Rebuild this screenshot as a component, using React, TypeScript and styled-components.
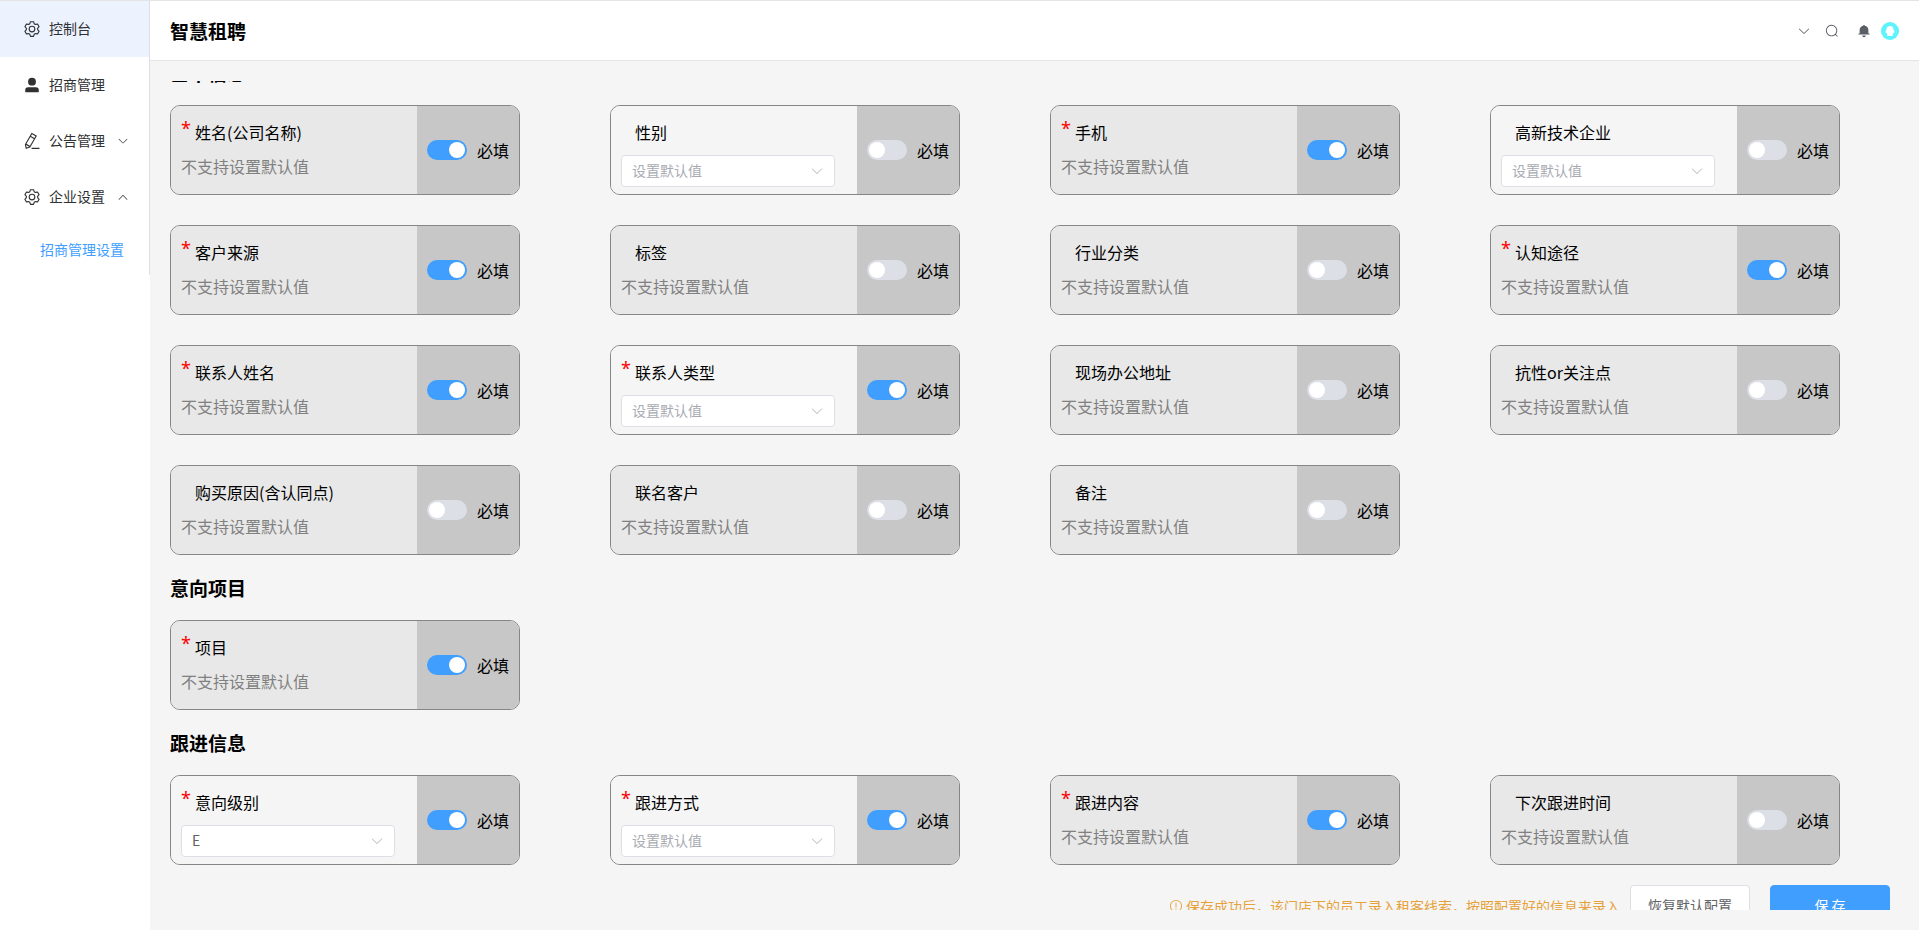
import React, { useLayoutEffect, useRef, useState } from "react";
import styled, { createGlobalStyle } from "styled-components";

const GlobalStyle = createGlobalStyle`
  *, *::before, *::after { box-sizing: border-box; }
  body {
    margin: 0;
    background: #f5f5f5;
    color: #000;
    font-family: "Noto Sans CJK SC", "Liberation Sans", sans-serif;
    font-size: 16px;
    font-weight: 400;
  }
  button, input, select { font: inherit; }
  h1, h2, p { margin: 0; }
`;

const Page = styled.div`
  display: flex;
  height: 100vh;
  border-top: 1px solid #e4e4e4;
`;

const Sidebar = styled.aside`
  flex: none;
  width: 150px;
  background: #fff;
`;

const Menu = styled.nav`
  display: flex;
  flex-direction: column;
  border-right: 1px solid #dcdfe6;
`;

const MenuItem = styled.a<{ $active?: boolean }>`
  display: flex;
  align-items: center;
  height: 56px;
  padding: 0 20px 0 23px;
  gap: 8px;
  background: ${(p) => (p.$active ? "#ecf3ff" : "transparent")};
  color: #303133;
  font-size: 14px;
  text-decoration: none;
`;

const MenuLabel = styled.span`
  padding-bottom: 2px;
`;

const MenuArrow = styled.span`
  display: flex;
  margin-left: auto;
`;

const SubMenuItem = styled.a`
  display: flex;
  align-items: center;
  height: 50px;
  padding: 0 0 2px 40px;
  color: #409eff;
  font-size: 14px;
  text-decoration: none;
  white-space: nowrap;
`;

const Body = styled.div`
  display: flex;
  flex: 1;
  flex-direction: column;
  min-width: 0;
`;

const Header = styled.header`
  display: flex;
  flex: none;
  align-items: center;
  justify-content: space-between;
  height: 60px;
  padding: 0 20px;
  background: #fff;
  border-bottom: 1px solid #e4e4e4;
`;

const Title = styled.h1`
  font-size: 19px;
  line-height: 24px;
  font-weight: 700;
`;

const HeaderTools = styled.div`
  display: flex;
  align-items: center;
  color: #5c5f66;
`;

const ToolButton = styled.button<{ $gap?: number }>`
  display: flex;
  padding: 0;
  margin-left: ${(p) => p.$gap ?? 0}px;
  border: 0;
  background: none;
  color: inherit;
`;

const Main = styled.main`
  display: flex;
  flex: 1;
  min-height: 0;
  padding: 20px;
`;

const Scroller = styled.div`
  flex: 1;
  overflow-y: auto;
  scrollbar-width: none;
`;

const SectionTitle = styled.h2`
  padding: 20px 0;
  font-size: 19px;
  line-height: 25px;
  font-weight: 700;
`;

const Grid = styled.div`
  display: grid;
  grid-template-columns: repeat(auto-fill, 350px);
  gap: 30px 90px;
`;

const Card = styled.div`
  display: flex;
  height: 90px;
  overflow: hidden;
  border: 1px solid #868686;
  border-radius: 10px;
`;

const Field = styled.div<{ $plain: boolean }>`
  flex: 1;
  padding: 14px 22px 0 10px;
  background: ${(p) => (p.$plain ? "#f5f5f5" : "#e8e8e8")};
`;

const FieldHead = styled.div`
  display: flex;
  height: 24px;
  line-height: 24px;
`;

const Star = styled.span`
  flex: none;
  width: 14px;
  color: #f00;
  font-family: "Noto Sans", sans-serif;
  font-size: 18px;
  line-height: 16px;
`;

const Unsupported = styled.p`
  padding-top: 10px;
  color: #808080;
  line-height: 24px;
`;

const SelectBox = styled.div`
  display: grid;
  align-items: center;
  margin-top: 11px;
  color: #b4b8c0;

  & > * { grid-area: 1 / 1; }
  & > svg { justify-self: end; margin-right: 11px; pointer-events: none; }
`;

const Select = styled.select<{ $empty: boolean }>`
  width: 100%;
  height: 32px;
  padding: 0 30px 2px 10px;
  appearance: none;
  border: 1px solid #dcdfe6;
  border-radius: 4px;
  background: #fff;
  color: ${(p) => (p.$empty ? "#a8abb2" : "#606266")};
  font-size: 14px;
`;

const Required = styled.label`
  display: flex;
  flex: none;
  align-items: center;
  gap: 10px;
  width: 102px;
  padding: 0 10px;
  background: #c7c7c7;
`;

const Switch = styled.input`
  flex: none;
  width: 40px;
  height: 20px;
  margin: 0;
  padding: 2px;
  appearance: none;
  border-radius: 10px;
  background: #dcdfe6;

  &::before {
    content: "";
    display: block;
    width: 16px;
    height: 16px;
    border-radius: 50%;
    background: #fff;
  }
  &:checked { background: #409eff; }
  &:checked::before { margin-left: 20px; }
`;

const Footer = styled.footer`
  display: flex;
  align-items: center;
  justify-content: flex-end;
  padding: 20px 9px 20px 0;
`;

const Notice = styled.p`
  display: flex;
  align-items: center;
  gap: 3px;
  padding-top: 2px;
  margin-right: 10px;
  color: #e6a23c;
  font-size: 14px;
`;

const Button = styled.button<{ $primary?: boolean }>`
  width: 120px;
  height: 40px;
  padding: 0;
  border: 1px solid ${(p) => (p.$primary ? "#409eff" : "#dcdfe6")};
  border-radius: 4px;
  background: ${(p) => (p.$primary ? "#409eff" : "#fff")};
  color: ${(p) => (p.$primary ? "#fff" : "#606266")};
  font-size: 14px;

  & + & { margin-left: 20px; }
`;

type IconProps = { size: number; path: string };

const Icon = ({ size, path }: IconProps) => (
  <svg width={size} height={size} viewBox="0 0 1024 1024" fill="currentColor" aria-hidden="true">
    <path d={path} />
  </svg>
);

const DOWN =
  "M831.872 340.864 512 652.672 192.128 340.864a30.592 30.592 0 0 0-42.752 0 29.12 29.12 0 0 0 0 41.6L489.664 714.24a32 32 0 0 0 44.672 0l340.288-331.712a29.12 29.12 0 0 0 0-41.728 30.592 30.592 0 0 0-42.752 0z";
const UP =
  "m488.832 344.32-339.84 356.672a32 32 0 0 0 0 44.16l.384.384a29.44 29.44 0 0 0 42.688 0l320-335.872 319.872 335.872a29.44 29.44 0 0 0 42.688 0l.384-.384a32 32 0 0 0 0-44.16L535.168 344.32a32 32 0 0 0-46.336 0z";
const GEAR =
  "M600.704 64a32 32 0 0 1 30.464 22.208l35.2 109.376c14.784 7.232 28.928 15.36 42.432 24.512l112.384-24.192a32 32 0 0 1 34.432 15.36L944.32 364.8a32 32 0 0 1-4.032 37.504l-77.12 85.12a357.12 357.12 0 0 1 0 49.024l77.12 85.248a32 32 0 0 1 4.032 37.504l-88.704 153.6a32 32 0 0 1-34.432 15.296L708.8 803.904c-13.44 9.088-27.648 17.28-42.368 24.512l-35.264 109.376A32 32 0 0 1 600.704 960H423.296a32 32 0 0 1-30.464-22.208L357.696 828.48a351.616 351.616 0 0 1-42.56-24.64l-112.32 24.256a32 32 0 0 1-34.432-15.36L79.68 659.2a32 32 0 0 1 4.032-37.504l77.12-85.248a357.12 357.12 0 0 1 0-48.896l-77.12-85.248A32 32 0 0 1 79.68 364.8l88.704-153.6a32 32 0 0 1 34.432-15.296l112.32 24.256c13.568-9.152 27.776-17.408 42.56-24.64l35.2-109.312A32 32 0 0 1 423.232 64H600.64zm-23.424 64H446.72l-36.352 113.088-24.512 11.968a294.113 294.113 0 0 0-34.816 20.096l-22.656 15.36-116.224-25.088-65.28 113.152 79.68 88.192-1.92 27.136a293.12 293.12 0 0 0 0 40.192l1.92 27.136-79.808 88.192 65.344 113.152 116.224-25.024 22.656 15.296a294.113 294.113 0 0 0 34.816 20.096l24.512 11.968L446.72 896h130.688l36.48-113.152 24.448-11.904a288.282 288.282 0 0 0 34.752-20.096l22.592-15.296 116.288 25.024 65.28-113.152-79.744-88.192 1.92-27.136a293.12 293.12 0 0 0 0-40.256l-1.92-27.136 79.808-88.128-65.344-113.152-116.288 24.96-22.592-15.232a287.616 287.616 0 0 0-34.752-20.096l-24.448-11.904L577.344 128zM512 320a192 192 0 1 1 0 384 192 192 0 0 1 0-384zm0 64a128 128 0 1 0 0 256 128 128 0 0 0 0-256z";
const USER =
  "M288 320a224 224 0 1 0 448 0 224 224 0 1 0-448 0zm544 608H160a32 32 0 0 1-32-32v-96a160 160 0 0 1 160-160h448a160 160 0 0 1 160 160v96a32 32 0 0 1-32 32z";
const EDIT =
  "m199.04 672.64 193.984 112 224-387.968-193.92-112-224 388.032zm-23.872 60.16 32.896 148.288 144.896-45.696L175.168 732.8zM455.04 229.248l193.92 112 56.704-98.112-193.984-112-56.64 98.112zM104.32 708.8l384-665.024 304.768 175.936L409.152 884.8h.064l-248.448 78.336L104.32 708.8zm384 254.272v-64h448v64h-448z";
const SEARCH =
  "m795.904 750.72 124.992 124.928a32 32 0 0 1-45.248 45.248L750.656 795.904a416 416 0 1 1 45.248-45.248zM480 832a352 352 0 1 0 0-704 352 352 0 0 0 0 704z";
const BELL =
  "M640 832a128 128 0 0 1-256 0h256zm192-64H134.4a38.4 38.4 0 0 1 0-76.8H192V448c0-154.88 110.08-284.16 256.32-313.6a64 64 0 1 1 127.36 0A320.13 320.13 0 0 1 832 448v243.2h57.6a38.4 38.4 0 0 1 0 76.8H832z";
const WARNING =
  "M512 64a448 448 0 1 1 0 896 448 448 0 0 1 0-896zm0 832a384 384 0 0 0 0-768 384 384 0 0 0 0 768zm48-176a48 48 0 1 1-96 0 48 48 0 0 1 96 0zm-48-464a32 32 0 0 1 32 32v288a32 32 0 0 1-64 0V288a32 32 0 0 1 32-32z";

const Avatar = () => (
  <svg width="18" height="18" viewBox="0 0 18 18" aria-hidden="true">
    <circle cx="9" cy="9" r="9" fill="#5cf3fd" />
    <path
      fill="#fff"
      d="M9 4c-2.400 0-3.500 1.400-3.500 3.400C4.700 8.700 4.200 10 4.800 11l.9-.300c.1.700.4 1.200.8 1.600-.5.300-.7.700-.5 1.100.4.700 2.100.7 3 .3.900.4 2.600.4 3-.3.2-.4 0-.8-.5-1.100.4-.4.7-.9.8-1.600l.9.300c.6-1 .1-2.300-.7-3.600C12.500 5.400 11.400 4 9 4z"
    />
  </svg>
);

type FieldData = { name: string; required?: boolean; select?: boolean; value?: string };

const SECTIONS: { title: string; fields: FieldData[] }[] = [
  {
    title: "基本信息",
    fields: [
      { name: "姓名(公司名称)", required: true },
      { name: "性别", select: true },
      { name: "手机", required: true },
      { name: "高新技术企业", select: true },
      { name: "客户来源", required: true },
      { name: "标签" },
      { name: "行业分类" },
      { name: "认知途径", required: true },
      { name: "联系人姓名", required: true },
      { name: "联系人类型", required: true, select: true },
      { name: "现场办公地址" },
      { name: "抗性or关注点" },
      { name: "购买原因(含认同点)" },
      { name: "联名客户" },
      { name: "备注" },
    ],
  },
  { title: "意向项目", fields: [{ name: "项目", required: true }] },
  {
    title: "跟进信息",
    fields: [
      { name: "意向级别", required: true, select: true, value: "E" },
      { name: "跟进方式", required: true, select: true },
      { name: "跟进内容", required: true },
      { name: "下次跟进时间" },
    ],
  },
];

const FieldCard = ({ field }: { field: FieldData }) => {
  const [required, setRequired] = useState(!!field.required);
  const [value, setValue] = useState(field.value ?? "");
  return (
    <Card>
      <Field $plain={!!field.select}>
        <FieldHead>
          <Star>{required ? "*" : ""}</Star>
          {field.select ? <label htmlFor={field.name}>{field.name}</label> : <span>{field.name}</span>}
        </FieldHead>
        {field.select ? (
          <SelectBox>
            <Select
              id={field.name}
              $empty={!value}
              value={value}
              onChange={(e) => setValue(e.target.value)}
            >
              <option value="">设置默认值</option>
              {field.value && <option>{field.value}</option>}
            </Select>
            <Icon size={14} path={DOWN} />
          </SelectBox>
        ) : (
          <Unsupported>不支持设置默认值</Unsupported>
        )}
      </Field>
      <Required>
        <Switch
          type="checkbox"
          role="switch"
          checked={required}
          onChange={(e) => setRequired(e.target.checked)}
        />
        必填
      </Required>
    </Card>
  );
};

export default function App() {
  const scroller = useRef<HTMLDivElement>(null);

  // The form opens with its first heading scrolled just out of view.
  useLayoutEffect(() => {
    if (scroller.current) scroller.current.scrollTop = 41;
  }, []);

  return (
    <>
      <GlobalStyle />
      <Page>
        <Sidebar>
          <Menu>
            <MenuItem href="#console" $active>
              <Icon size={18} path={GEAR} />
              <MenuLabel>控制台</MenuLabel>
            </MenuItem>
            <MenuItem href="#leasing">
              <Icon size={18} path={USER} />
              <MenuLabel>招商管理</MenuLabel>
            </MenuItem>
            <MenuItem href="#notices">
              <Icon size={18} path={EDIT} />
              <MenuLabel>公告管理</MenuLabel>
              <MenuArrow>
                <Icon size={12} path={DOWN} />
              </MenuArrow>
            </MenuItem>
            <MenuItem href="#company">
              <Icon size={18} path={GEAR} />
              <MenuLabel>企业设置</MenuLabel>
              <MenuArrow>
                <Icon size={12} path={UP} />
              </MenuArrow>
            </MenuItem>
            <SubMenuItem href="#leasing-settings">招商管理设置</SubMenuItem>
          </Menu>
        </Sidebar>
        <Body>
          <Header>
            <Title>智慧租聘</Title>
            <HeaderTools>
              <ToolButton aria-label="展开">
                <Icon size={14} path={DOWN} />
              </ToolButton>
              <ToolButton aria-label="搜索" $gap={14}>
                <Icon size={14} path={SEARCH} />
              </ToolButton>
              <ToolButton aria-label="通知" $gap={18}>
                <Icon size={14} path={BELL} />
              </ToolButton>
              <ToolButton aria-label="账户" $gap={10}>
                <Avatar />
              </ToolButton>
            </HeaderTools>
          </Header>
          <Main>
            <Scroller ref={scroller}>
              {SECTIONS.map((section) => (
                <section key={section.title}>
                  <SectionTitle>{section.title}</SectionTitle>
                  <Grid>
                    {section.fields.map((field) => (
                      <FieldCard key={field.name} field={field} />
                    ))}
                  </Grid>
                </section>
              ))}
              <Footer>
                <Notice>
                  <Icon size={14} path={WARNING} />
                  保存成功后，该门店下的员工录入租客线索，按照配置好的信息来录入
                </Notice>
                <Button>恢复默认配置</Button>
                <Button $primary>保 存</Button>
              </Footer>
            </Scroller>
          </Main>
        </Body>
      </Page>
    </>
  );
}
